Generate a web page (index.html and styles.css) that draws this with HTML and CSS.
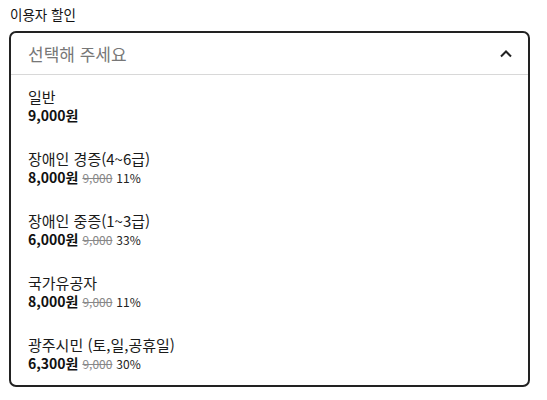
FILE: index.html
```html
<!DOCTYPE html>
<html lang="ko">
<head>
<meta charset="utf-8">
<link rel="stylesheet" href="styles.css">
</head>
<body>
<div class="wrap">
  <div class="label">이용자 할인</div>
  <div class="select">
    <div class="head">
      <span class="placeholder">선택해 주세요</span>
      <svg class="chev" width="14" height="10" viewBox="0 0 14 10"><path d="M2 7.5 L7 2.5 L12 7.5" fill="none" stroke="#222" stroke-width="2"/></svg>
    </div>
    <ul class="list">
      <li class="item"><div class="name">일반</div><div class="price"><b>9,000원</b></div></li>
      <li class="item"><div class="name">장애인 경증(4~6급)</div><div class="price"><b>8,000원</b> <s>9,000</s> <span class="pct">11%</span></div></li>
      <li class="item"><div class="name">장애인 중증(1~3급)</div><div class="price"><b>6,000원</b> <s>9,000</s> <span class="pct">33%</span></div></li>
      <li class="item"><div class="name">국가유공자</div><div class="price"><b>8,000원</b> <s>9,000</s> <span class="pct">11%</span></div></li>
      <li class="item"><div class="name">광주시민 (토,일,공휴일)</div><div class="price"><b>6,300원</b> <s>9,000</s> <span class="pct">30%</span></div></li>
    </ul>
  </div>
</div>
</body>
</html>
```
FILE: styles.css
```css
* { box-sizing: border-box; }
body {
  margin: 0;
  background: #fff;
  font-family: "Noto Sans CJK KR", "Noto Sans", sans-serif;
  color: #111;
}
.wrap { padding: 5px 17px 0 9px; }
.label {
  font-size: 13.5px;
  line-height: 18px;
  padding-left: 1px;
  margin-bottom: 8px;
}
.select {
  border: 2px solid #222;
  border-radius: 7px;
  overflow: hidden;
}
.head {
  height: 42px;
  display: flex;
  align-items: center;
  justify-content: space-between;
  padding: 0 17px;
  border-bottom: 1px solid #d8d8d8;
}
.placeholder {
  font-size: 17px;
  color: #777;
}
.chev { display: block; margin-right: -2px; }
.list { list-style: none; margin: 0; padding: 0; }
.item { padding: 13px 17px 12px; }
.name { font-size: 15px; line-height: 18px; color: #1a1a1a; }
.price { font-size: 14px; line-height: 19px; }
.price b { font-weight: 700; }
.price s { font-size: 12px; line-height: 1; color: #888; }
.pct { font-size: 12px; line-height: 1; color: #222; }
```
